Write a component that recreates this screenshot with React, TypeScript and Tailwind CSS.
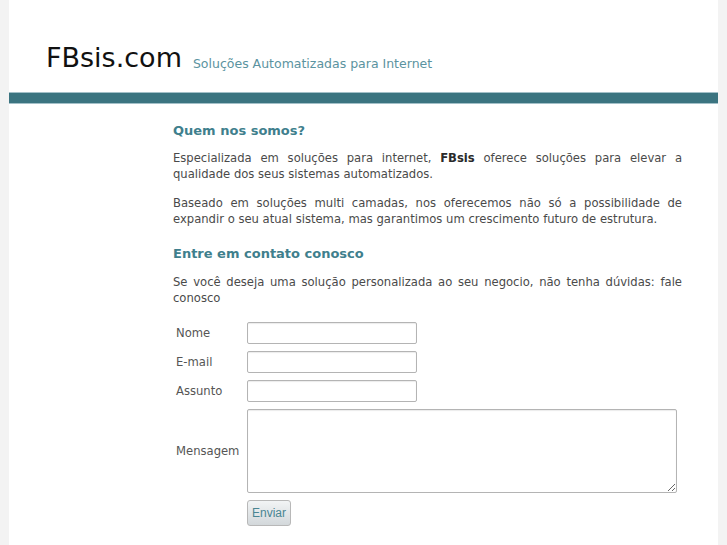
import React from 'react';

const dv = { fontFamily: '"DejaVu Sans", Verdana, sans-serif' };

const Field = ({ label }: { label: string }) => (
  <div className="flex items-center h-[22px] mb-[7px]">
    <label className="w-[74px] pl-[3px] text-[11.6px] text-[#555]">{label}</label>
    <input
      type="text"
      className="w-[170px] h-[22px] border border-[#b4b4b4] rounded-[2px] bg-white shadow-[inset_0_1px_1px_rgba(0,0,0,0.08)] outline-none"
    />
  </div>
);

export default function App() {
  return (
    <div className="min-h-screen bg-[#f3f3f3] px-[9px]" style={dv}>
      <div className="bg-white min-h-screen">
        <header className="h-[92px] flex items-end pb-[21px] pl-[37px]">
          <h1 className="text-[27px] leading-none text-[#111]">FBsis.com</h1>
          <span className="ml-[11px] text-[12.5px] leading-none text-[#5b93a0] mb-[1px]">Soluções Automatizadas para Internet</span>
        </header>
        <div className="h-[12px] bg-[#3b7480] border-y border-[#a3c0c8]" />

        <main className="ml-[164px] w-[509px] pt-[17px] text-[11.6px] leading-[16px] text-[#4a4a4a]">
          <h2 className="text-[13px] font-bold leading-[20px] text-[#3f7f8d] mb-[9px]">Quem nos somos?</h2>
          <p className="text-justify mb-[13px]">
            Especializada em soluções para internet, <b className="font-bold text-[#2a2a2a]">FBsis</b> oferece soluções para elevar a qualidade dos seus sistemas automatizados.
          </p>
          <p className="text-justify mb-[17px]">
            Baseado em soluções multi camadas, nos oferecemos não só a possibilidade de expandir o seu atual sistema, mas garantimos um crescimento futuro de estrutura.
          </p>

          <h2 className="text-[13px] font-bold leading-[20px] text-[#3f7f8d] mb-[10px]">Entre em contato conosco</h2>
          <p className="text-justify mb-[16px]">
            Se você deseja uma solução personalizada ao seu negocio, não tenha dúvidas: fale conosco
          </p>

          <form onSubmit={(e) => e.preventDefault()}>
            <Field label="Nome" />
            <Field label="E-mail" />
            <Field label="Assunto" />
            <div className="flex items-center h-[84px] mb-[7px]">
              <label className="w-[74px] pl-[3px] text-[11.6px] text-[#555]">Mensagem</label>
              <textarea className="w-[430px] h-[84px] border border-[#b4b4b4] rounded-[2px] bg-white shadow-[inset_0_1px_1px_rgba(0,0,0,0.08)] outline-none" />
            </div>
            <div className="pl-[74px]">
              <button
                type="submit"
                className="w-[44px] h-[26px] rounded-[3px] border border-[#b8b8b8] bg-gradient-to-b from-[#f2f4f5] to-[#d3d8db] text-[12px] text-[#4a8592]"
                style={{ fontFamily: '"Liberation Sans", Arial, sans-serif' }}
              >
                Enviar
              </button>
            </div>
          </form>
        </main>
      </div>
    </div>
  );
}
